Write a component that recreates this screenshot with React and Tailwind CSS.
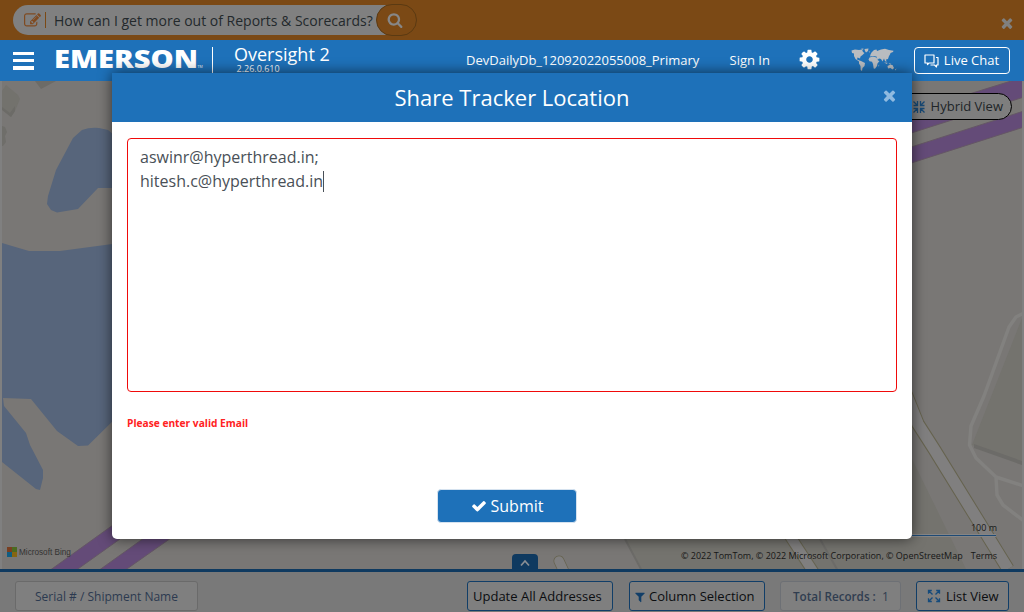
import React from "react";

const PATHS = {
  cog: "M1152 896q0-106-75-181t-181-75-181 75-75 181 75 181 181 75 181-75 75-181zm512-109v222q0 12-8 23t-20 13l-185 28q-19 54-39 91 35 50 107 138 10 12 10 25t-9 23q-27 37-99 108t-94 71q-12 0-26-9l-138-108q-44 23-91 38-16 136-29 186-7 28-36 28h-222q-14 0-24.500-8.500t-11.500-21.500l-28-184q-49-16-90-37l-141 107q-10 9-25 9-14 0-25-11-126-114-165-168-7-10-7-23 0-12 8-23 15-21 51-66.500t54-70.500q-27-50-41-99l-183-27q-13-2-21-12.500t-8-23.500v-222q0-12 8-23t19-13l186-28q14-46 39-92-40-57-107-138-10-12-10-24 0-10 9-23 26-36 98.500-107.500t94.500-71.500q13 0 26 10l138 107q44-23 91-38 16-136 29-186 7-28 36-28h222q14 0 24.500 8.500t11.500 21.500l28 184q49 16 90 37l142-107q9-9 24-9 13 0 25 10 129 119 165 170 7 8 7 22 0 12-8 23-15 21-51 66.500t-54 70.500q26 50 41 98l183 28q13 2 21 12.500t8 23.500z",
  times: "M1490 1322q0 40-28 68l-136 136q-28 28-68 28t-68-28l-294-294-294 294q-28 28-68 28t-68-28l-136-136q-28-28-28-68t28-68l294-294-294-294q-28-28-28-68t28-68l136-136q28-28 68-28t68 28l294 294 294-294q28-28 68-28t68 28l136 136q28 28 28 68t-28 68l-294 294 294 294q28 28 28 68z",
  check: "M1671 566q0 40-28 68l-724 724-136 136q-28 28-68 28t-68-28l-136-136-362-362q-28-28-28-68t28-68l136-136q28-28 68-28t68 28l294 295 656-657q28-28 68-28t68 28l136 136q28 28 28 68z",
  search: "M1216 832q0-185-131.500-316.500t-316.500-131.500-316.500 131.500-131.500 316.500 131.500 316.500 316.500 131.500 316.500-131.500 131.500-316.500zm512 832q0 52-38 90t-90 38q-54 0-90-38l-343-342q-179 124-399 124-143 0-273.500-55.500t-225-150-150-225-55.500-273.500 55.500-273.500 150-225 225-150 273.500-55.500 273.500 55.500 225 150 150 225 55.500 273.500q0 220-124 399l343 343q37 37 37 90z",
  filter: "M1595 295q17 41-14 70l-493 493v742q0 42-39 59-13 5-25 5-27 0-45-19l-256-256q-19-19-19-45v-486l-493-493q-31-29-14-70 17-39 59-39h1280q42 0 59 39z",
  edit: "M888 1184l116-116-152-152-116 116v56h96v96h56zm440-720q-16-16-33 1l-350 350q-17 17-1 33t33-1l350-350q17-17 1-33zm80 594v190q0 119-84.500 203.500t-203.500 84.500h-832q-119 0-203.500-84.500t-84.500-203.500v-832q0-119 84.500-203.500t203.500-84.500h832q63 0 117 25 15 7 18 23 3 17-9 29l-49 49q-14 14-32 8-23-6-45-6h-832q-66 0-113 47t-47 113v832q0 66 47 113t113 47h832q66 0 113-47t47-113v-126q0-13 9-22l64-64q15-15 35-7t20 29zm-96-738l288 288-672 672h-288v-288zm444 132l-92 92-288-288 92-92q28-28 68-28t68 28l152 152q28 28 28 68t-28 68z",
};

function Icon({ name, className }) {
  return (
    <svg viewBox="0 0 1792 1792" fill="currentColor" className={className}>
      <path d={PATHS[name]} />
    </svg>
  );
}

function WorldMap() {
  return (
    <svg width="46" height="24" viewBox="0 0 46 24" className="shrink-0" fill="#b9bcc0">
      <path d="M0.500 2.500 L4 1.500 L8 2 L11 1.500 L12 4 L13.500 5 L11.500 7 L9.500 8.500 L9 10.500 L6.500 9.500 L6 11.500 L8.500 12.500 L10 13 L14 15 L13.500 18 L11.500 20 L11 23 L9.700 22 L9.500 18 L8 15.500 L8 13.500 L4.500 11 L3 8 L3 5.500 L1 5 Z" />
      <path d="M13.500 1 L17.500 0.500 L17 3 L15 4.500 L14 3 Z M10 0.800 L12.500 0.500 L12 2 Z M17.500 3.800 L19.200 3.600 L18.700 4.500 Z" />
      <path d="M19.500 6.500 L20.500 4.500 L23 2 L25.500 1.500 L26 3 L30 1.500 L34 0.800 L38 2 L42.500 2.700 L42 4 L39.500 5 L39 6.500 L38 8 L37 11 L35 11.500 L35.500 14 L34 13 L33 10.500 L31.500 13.500 L30 11 L28 10.500 L26.500 12 L25.500 8.500 L22.500 8 L19 8.500 Z" />
      <path d="M18.500 9.500 L22 8.500 L25.500 9.500 L27 12.500 L28.500 13 L26.500 15.500 L26 18 L24 20.800 L22.700 20.500 L22 16 L21 13.700 L18.500 13.300 L17.500 11.500 Z M27.500 17 L28.300 16.800 L27.700 19 Z" />
      <path d="M33 14.500 L36.500 14.800 L36 16 Z M37.500 15 L40.500 16 L39 16.500 Z M36.500 18 L39 16.800 L41.500 17 L43 20 L41.500 21.500 L39.500 20 L37 20.500 Z M44 21.500 L45.500 20.500 L44.500 22.500 Z" />
    </svg>
  );
}

function ArrowsIcon({ inward, className }) {
  return (
    <svg width="14" height="14" viewBox="0 0 14 14" className={className} fill="none" stroke="currentColor" strokeWidth="1.300">
      {inward ? (
        <path d="M1.500 1.500 L5.500 5.500 M1.500 5.500 H5.500 V1 M12.500 1.500 L8.500 5.500 M12.500 5.500 H8.500 V1 M1.500 12.500 L5.500 8.500 M1.500 8.500 H5.500 V13 M12.500 12.500 L8.500 8.500 M12.500 8.500 H8.500 V13" />
      ) : (
        <path d="M1.500 1.500 L5.500 5.500 M4.800 1.500 H1.500 V4.800 M12.500 1.500 L8.500 5.500 M9.200 1.500 H12.500 V4.800 M1.500 12.500 L5.500 8.500 M4.800 12.500 H1.500 V9.200 M12.500 12.500 L8.500 8.500 M9.200 12.500 H12.500 V9.200" />
      )}
    </svg>
  );
}

function MapDrawing() {
  return (
    <svg className="absolute inset-0" width="1024" height="488" viewBox="0 81 1024 488">
      <rect x="0" y="81" width="1024" height="488" fill="#797775" />
      {/* terrain */}
      <path d="M700 539 L776 569 H966 L912 459 V539 Z M640 539 L625 539 L642 569 L776 569 L760 539 Z" fill="#74736e" />
      <path d="M1022 318 L972 445 L1022 463 Z" fill="#74736e" />
      <path d="M974 444 L1022 461 V465 L974 448 Z" fill="#6c6b68" />
      <path d="M6 85 L18 95 L20 99 L15 111 L11 117 L2 109 V91 Z" fill="#73726d" />
      <path d="M15 106 L15 111 L11 117 L2 110 V107 L10 113 Z M35 81 H56 L41 89 Z" fill="#6c6b67" />
      <path d="M2 126 L5 127 L7 132 L5 136 L6 142 L3 146 H2 Z" fill="#6f6e6a" />
      {/* water */}
      <path d="M82 130 Q90 127 99 128 L108 130 L120 140 V188 H98 L78 209 L57 212.500 L51 210 L47 204 L48 196 L56 170 L73 138 Z" fill="#57657b" />
      <path d="M2 243 L12 246 L29 251 H60 L120 243 V414 L88 445.500 L78 446 L57 431 L31 399 L3 398 L4 406 L26 433 L30 445 L43 470 V478 L40 490 L36 489 L2 462 Z" fill="#57657b" />
      {/* motorways */}
      <g fill="#644b78" stroke="#655765" strokeWidth="1">
        <path d="M49 571 L120 520 V539 L75 571 Z" />
        <path d="M98 571 L144 538 H171 L124 571 Z" />
        <path d="M905 114 L1024 77 V97 L905 135 Z" />
        <path d="M905 149 L1024 111 V127 L905 165 Z" />
      </g>
      {/* streets */}
      <g fill="none" strokeLinejoin="round">
        <path d="M906 394 L918 424 L934 449 L1008 569" stroke="#66634f" strokeWidth="13.500" />
        <path d="M906 394 L918 424 L934 449 L1008 569" stroke="#807f7f" strokeWidth="11.500" />
        <path d="M786 530 L816 576" stroke="#66634f" strokeWidth="12" />
        <path d="M786 530 L816 576" stroke="#807f7f" strokeWidth="10" />
        <path d="M559 561 L566 576" stroke="#66634f" strokeWidth="11" strokeLinecap="round" />
        <path d="M559 561 L566 576" stroke="#807f7f" strokeWidth="9.500" strokeLinecap="round" />
        <path d="M1024 313 L1016 317 L1009 327 L984 396 L971 426 L969.500 445 L976 458 L996 477 L1024 486 M996 477 L997 495 L1003 505 L1024 521" stroke="#82817f" strokeWidth="3.500" />
        <path d="M625 539 L642 571 M820 539 L838 571" stroke="#6c6b68" strokeWidth="2" />
      </g>
      <path d="M912 535.500 H996" stroke="#858585" strokeWidth="3" />
      <path d="M912 535.500 H996" stroke="#1e4a75" strokeWidth="1" />
      <path d="M1 81 V569 M1023 81 V569" stroke="#808080" strokeWidth="2" />
    </svg>
  );
}

export default function App() {
  return (
    <div className="relative flex h-[612px] w-[1024px] flex-col overflow-hidden whitespace-nowrap bg-[#7b7b7b] font-['Open_Sans',sans-serif]">
      {/* tips bar */}
      <div className="flex h-10 shrink-0 items-center justify-between bg-[#7b4915] pl-[13px] pr-[10px]">
        <div className="flex items-center">
          <div className="flex h-[30px] w-[376px] items-center rounded-l-full bg-[#808080] pl-[11px] text-[14px] text-[#23292c]">
            <Icon name="edit" className="h-[17px] w-[17px] text-[#7f4a20]" />
            <span className="ml-[4px] h-4 w-px bg-[#7b4915]" />
            <span className="ml-2">How can I get more out of Reports &amp; Scorecards?</span>
          </div>
          <button className="-ml-[13px] flex h-8 w-[41px] items-center justify-center rounded-full border border-[#5b3a12] bg-[#7b4915] pr-[3px]">
            <Icon name="search" className="h-4 w-4 text-[#878787]" />
          </button>
        </div>
        <Icon name="times" className="-mr-px mt-[5px] h-4 w-4 text-[#80807f]" />
      </div>

      {/* navigation */}
      <div className="flex h-[41px] shrink-0 items-center bg-[#1e71b9] pl-[13px] text-white">
        <div className="flex w-[21px] flex-col gap-[4px]">
          <span className="h-[3px] bg-white" />
          <span className="h-[3px] bg-white" />
          <span className="h-[4px] bg-white" />
        </div>
        <svg width="150" height="24" viewBox="0 0 150 24" className="ml-5 shrink-0">
          <text x="0" y="18.500" fontFamily="Open Sans" fontWeight="800" fontSize="24" textLength="144" lengthAdjust="spacingAndGlyphs" fill="#fff">EMERSON</text>
          <text x="143.500" y="18.500" fontFamily="Open Sans" fontSize="3.500" fill="#fff">TM</text>
        </svg>
        <div className="ml-2 h-[27px] w-px bg-white" />
        <div className="ml-[21px] flex w-[232px] flex-col pb-[2px]">
          <span className="text-[18px] leading-[19px]">Oversight 2</span>
          <span className="ml-[2.500px] text-[9px] leading-[10px]">2.26.0.610</span>
        </div>
        <span className="w-[263.500px] text-[13px]">DevDailyDb_12092022055008_Primary</span>
        <span className="w-[68px] text-[13px]">Sign In</span>
        <Icon name="cog" className="mb-[2px] h-[23px] w-[23px] shrink-0" />
        <div className="-mt-px ml-[30px]"><WorldMap /></div>
        <button className="ml-[17px] flex h-[27px] w-24 shrink-0 items-center justify-center gap-[5px] rounded border border-white text-[13px]">
          <svg width="15" height="14" viewBox="0 0 15 14" fill="none" stroke="currentColor" strokeWidth="1.200" strokeLinejoin="round">
            <path d="M1 1 H10 V9 H5 L3.500 10.500 V9 H1 Z" />
            <path d="M12 3.500 H14 V11 H12.500 V13 L10.500 11 H6.500" />
          </svg>
          Live Chat
        </button>
      </div>

      {/* map */}
      <div className="relative flex h-[488px] shrink-0 flex-col justify-between">
        <MapDrawing />
        <div className="relative flex justify-end pr-3 pt-3">
          <div className="flex h-[27px] w-[128px] items-center justify-end rounded-full border border-black bg-[#7e7e7e] pr-2 text-[13px] text-[#202528]">
            <ArrowsIcon inward className="mr-[5px] text-[#174975]" />
            Hybrid View
          </div>
        </div>
        <div className="relative flex h-[50px] items-start justify-between pl-[7px] pr-[27px]">
          <div className="mt-[28px] flex items-center gap-[2px] font-['Liberation_Sans',sans-serif] text-[8.200px] leading-none text-[#333]">
            <div className="grid grid-cols-2">
              <span className="h-[5px] w-[5px] bg-[#793e20]" />
              <span className="h-[5px] w-[5px] bg-[#4b6a20]" />
              <span className="h-[5px] w-[5px] bg-[#105d82]" />
              <span className="h-[5px] w-[5px] bg-[#866512]" />
            </div>
            <span className="pt-[2px]">Microsoft Bing</span>
          </div>
          <div className="flex flex-col items-end pt-px text-[#171717]">
            <span className="text-[9px] leading-[16px]">100 m</span>
            <div className="mt-[12px] flex gap-2 text-[9px] leading-[16px]">
              <span>© 2022 TomTom, © 2022 Microsoft Corporation, © OpenStreetMap</span>
              <span>Terms</span>
            </div>
          </div>
        </div>
        <div className="absolute bottom-0 left-[512px] flex h-[15px] w-[26px] items-center justify-center rounded-t bg-[#0f3a60] pt-0.5">
          <svg width="10" height="8" viewBox="0 0 10 8" fill="none" stroke="#8a8f94" strokeWidth="1.700"><path d="M1 6.500 L5 2 L9 6.500" /></svg>
        </div>
      </div>

      {/* footer */}
      <div className="flex h-[43px] shrink-0 items-start border-t-[3px] border-[#0f3a60] bg-[#797979] pl-[15px] pt-[9px] text-[13px] text-[#0b0d10]">
        <div className="flex h-[30px] w-[183px] items-center justify-center rounded-[3px] border border-[#6a6a6a] bg-[#7f7f7f] pt-px text-[12px] text-[#2c3a50]">Serial # / Shipment Name</div>
        <div className="ml-[269px] flex h-[30px] w-[146px] items-center rounded-[3px] border border-[#113e68] bg-[#7f7f7f] pl-[5px] pt-0.5">Update All Addresses</div>
        <div className="ml-4 flex h-[30px] w-[136px] items-center gap-[3px] rounded-[3px] border border-[#113e68] bg-[#7f7f7f] pl-1 pt-0.5">
          <Icon name="filter" className="h-3 w-3 text-[#113e68]" />
          Column Selection
        </div>
        <div className="ml-[15px] flex h-[30px] w-[121px] items-center rounded-[3px] border border-[#6d7075] bg-[#7f7f7f] pl-3 pt-px text-[12px] text-[#303d50]">
          <span className="w-[89px] text-[11.700px] font-semibold">Total Records :</span>
          <span>1</span>
        </div>
        <div className="ml-[15px] flex h-[30px] w-[93px] items-center gap-[5px] rounded-[3px] border border-[#113e68] bg-[#7f7f7f] pl-[10px] pt-0.5">
          <ArrowsIcon className="mb-0.5 text-[#154b7c]" />
          List View
        </div>
      </div>

      {/* share dialog */}
      <div className="absolute left-[112px] top-[73px] flex h-[466px] w-[800px] flex-col overflow-hidden rounded-b-[5px] bg-white shadow-[0_0_14px_rgba(0,0,0,0.600)]">
        <div className="flex h-[49px] shrink-0 items-center bg-[#1e71b9] text-white">
          <span className="flex-1 pl-[14px] text-center text-[22px]">Share Tracker Location</span>
          <Icon name="times" className="-ml-[17px] mb-[4px] mr-[14px] h-[17px] w-[17px] text-[#8fbae0]" />
        </div>
        <div className="flex flex-1 flex-col px-[15px] pt-4">
          <div className="h-[254px] rounded border border-[#f00a0a] px-3 pt-[6px] text-[16px] leading-6 text-[#495057]">
            <div>aswinr@hyperthread.in;</div>
            <div className="flex items-center">hitesh.c@hyperthread.in<span className="h-[21px] w-px bg-[#495057]" /></div>
          </div>
          <div className="mt-[23px] text-[10.200px] font-bold leading-4 text-[#ff2222]">Please enter valid Email</div>
          <button className="ml-[310px] mt-[58px] flex h-[34px] w-[140px] items-center justify-center gap-1 rounded border border-[#d5e2ef] bg-[#1e71b9] text-[16px] text-white">
            <Icon name="check" className="h-4 w-4" />
            Submit
          </button>
        </div>
      </div>
    </div>
  );
}
